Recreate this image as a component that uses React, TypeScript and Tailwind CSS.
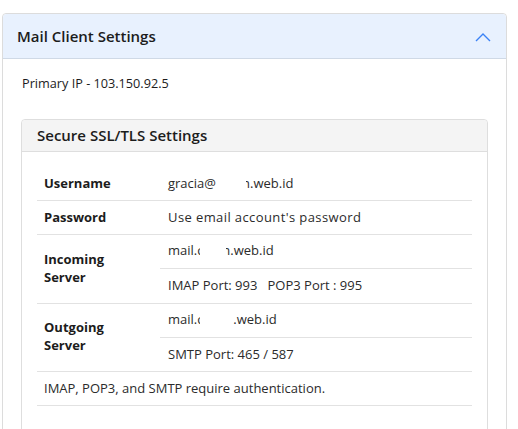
import React from "react";

const font = { fontFamily: '"Open Sans", "Liberation Sans", sans-serif' };

function Redact({ w }: { w: number }) {
  return <span className="inline-block" style={{ width: w }} />;
}

export default function App() {
  return (
    <div className="w-[518px] h-[429px] bg-white overflow-hidden pt-[13px] pl-[2px]" style={font}>
      <div className="w-[505px] border border-[#dcdcdc] rounded-t-[4px] h-[440px]">
        <div className="h-[45px] bg-[#e8f1fe] border-b border-[#cfd9e6] flex items-center justify-between pl-[14px] pr-[15px] rounded-t-[4px]">
          <span className="text-[15px] font-semibold text-[#1c1c1c]">Mail Client Settings</span>
          <svg width="16" height="9" viewBox="0 0 16 9" className="mt-[2px]">
            <path d="M1 8 L8 1 L15 8" fill="none" stroke="#3b82f6" strokeWidth="1.4" />
          </svg>
        </div>
        <div className="pl-[19px] pt-[14px] text-[12.7px] text-[#1c1c1c] h-[21px] leading-[21px]">Primary IP - 103.150.92.5</div>
        <div className="ml-[18px] mt-[39px] w-[467px] border border-[#dedede] rounded-t-[4px] h-[330px]">
          <div className="h-[32px] bg-[#f4f4f4] border-b border-[#dedede] flex items-center pl-[15px] rounded-t-[4px]">
            <span className="text-[15px] font-semibold text-[#1c1c1c]">Secure SSL/TLS Settings</span>
          </div>
          <div className="mx-[15px] mt-[15px] text-[13px] text-[#2b2b2b]">
            <div className="flex h-[34px] border-b border-[#e2e2e2] items-center">
              <div className="w-[123px] pl-[7px] font-bold text-[#1c1c1c]">Username</div>
              <div className="pl-[8px] flex items-center">
                gracia@<Redact w={30} />
                <span className="inline-block overflow-hidden w-[4px] flex justify-end"><span className="-ml-[4px]">n</span></span>
                .web.id
              </div>
            </div>
            <div className="flex h-[34px] border-b border-[#e2e2e2] items-center">
              <div className="w-[123px] pl-[7px] font-bold text-[#1c1c1c]">Password</div>
              <div className="pl-[8px] tracking-[0.4px]">Use email account's password</div>
            </div>
            <div className="flex h-[69px] border-b border-[#e2e2e2]">
              <div className="w-[123px] pl-[7px] font-bold text-[#1c1c1c] flex items-center leading-[18px] pb-[2px]">
                Incoming<br />Server
              </div>
              <div className="flex-1 flex flex-col">
                <div className="h-[34px] border-b border-[#e2e2e2] pl-[8px] flex items-center pb-[2px]">
                  mail.<span className="inline-block overflow-hidden w-[3px]">c</span><Redact w={26} /><span className="inline-block overflow-hidden w-[4px] flex justify-end"><span className="-ml-[4px]">n</span></span>.web.id
                </div>
                <div className="flex-1 pl-[8px] flex items-center">
                  IMAP Port: 993&nbsp;&nbsp;&nbsp;POP3 Port : 995
                </div>
              </div>
            </div>
            <div className="flex h-[68px] border-b border-[#e2e2e2]">
              <div className="w-[123px] pl-[7px] font-bold text-[#1c1c1c] flex items-center leading-[18px] pb-[4px]">
                Outgoing<br />Server
              </div>
              <div className="flex-1 flex flex-col">
                <div className="h-[34px] border-b border-[#e2e2e2] pl-[8px] flex items-center pb-[2px]">
                  mail.<span className="inline-block overflow-hidden w-[3px]">c</span><Redact w={33} />.web.id
                </div>
                <div className="flex-1 pl-[8px] flex items-center">SMTP Port: 465 / 587</div>
              </div>
            </div>
            <div className="flex h-[34px] border-b border-[#e2e2e2] items-center pl-[7px]">
              IMAP, POP3, and SMTP require authentication.
            </div>
          </div>
        </div>
      </div>
    </div>
  );
}
